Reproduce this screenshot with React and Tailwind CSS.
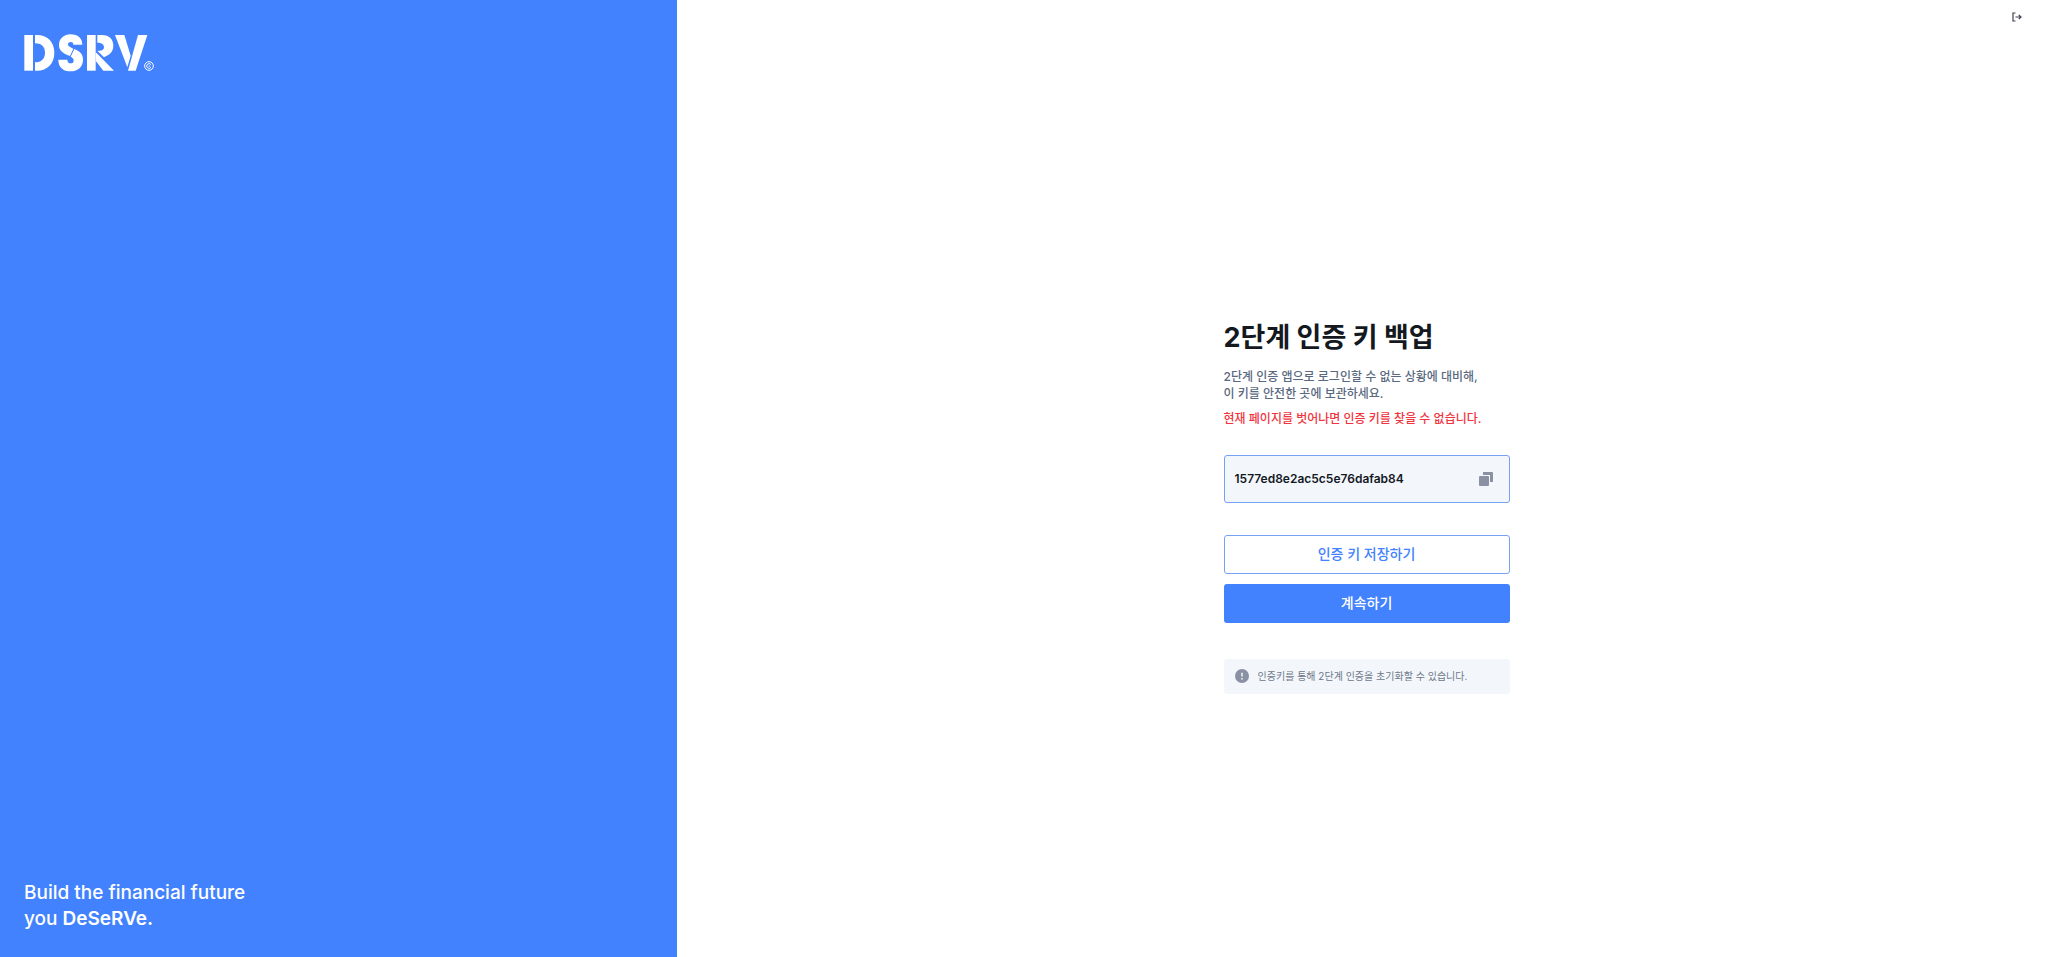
import React, { useState } from 'react';

const AUTH_KEY = '1577ed8e2ac5c5e76dafab84';

const Logo = () => (
  <svg className="w-[131px] h-[38px]" viewBox="42 42 393 114" fill="white" role="img" aria-label="DSRV">
    {/* D */}
    <path d="M43 45H69V152H43z" />
    <path d="M75 45H80C113 45 133 66 133 98S113 152 80 152H75V127C94 127 105 116 105 98S94 70 75 70z" />
    {/* S */}
    <path d="M217 74H190C190 68 187 66 182 66C177 66 174 69 174 73C174 78 177 80 184 83L190 86L180 108C158 100 147 92 147 75C147 56 162 43 182 43C203 43 217 55 217 74z" />
    <path d="M145 119H172C172 126 176 130 182 130C188 130 191 127 191 122C191 116 188 113 182 110L193 87C211 94 219 103 219 119C219 140 204 154 182 154C159 154 145 141 145 119z" />
    {/* R */}
    <path d="M231 45H257V152H231z" />
    <path d="M262 45H276C298 45 310 58 310 77C310 89 305 98 296 104L282 112L262 92C275 94 282 90 282 82C282 73 275 68 262 68z" />
    <path d="M257 96L312 152H280L257 122z" />
    {/* V */}
    <path d="M315 45H343L362 107L352 142z" />
    <path d="M384 45H412L377 152H354z" />
    <g fill="none" stroke="white" strokeWidth="3">
      <circle cx="417" cy="138" r="13" />
      <path d="M423 134A7 7 0 1 0 423 142" />
    </g>
    <circle cx="418" cy="138" r="2" />
  </svg>
);

const App = () => {
  const [copied, setCopied] = useState(false);

  const handleCopy = () => {
    navigator.clipboard?.writeText(AUTH_KEY);
    setCopied(true);
  };

  const handleSave = () => {
    const link = document.createElement('a');
    link.href = URL.createObjectURL(new Blob([AUTH_KEY], { type: 'text/plain' }));
    link.download = 'key.txt';
    link.click();
  };

  return (
    <div className="flex min-h-screen bg-white font-['Inter','Noto_Sans_CJK_KR',sans-serif]">
      <aside className="w-[33.06%] shrink-0 flex flex-col justify-between bg-[#4282ff] px-6 pt-[34px] pb-[25px]">
        <Logo />
        <p className="text-[19px] leading-[26px] font-medium text-white">
          Build the financial future
          <br />
          you <strong className="font-semibold">DeSeRVe.</strong>
        </p>
      </aside>

      <div className="flex-1 flex flex-col">
        <header className="flex justify-end h-8 pt-3 pr-[26px]">
          <button type="button" aria-label="로그아웃" className="w-[10px] h-[10px]">
            <svg viewBox="0 0 10 10" className="w-full h-full" fill="none" stroke="#3d424d" strokeWidth="1.2">
              <path d="M3.5 1H1V9H3.5M3.5 5H9M6.8 2.8L9 5L6.8 7.2" />
            </svg>
          </button>
        </header>

        <main className="flex-1 flex items-center justify-center pl-2 pt-6">
          <div className="w-[286px]">
            <h1 className="text-[27px] leading-9 font-bold text-[#14181f]">2단계 인증 키 백업</h1>
            <p className="mt-3 text-xs leading-[17px] font-medium text-[#5a6980]">
              2단계 인증 앱으로 로그인할 수 없는 상황에 대비해,
              <br />이 키를 안전한 곳에 보관하세요.
            </p>
            <p className="mt-2 text-xs leading-[17px] font-medium text-[#f0353f]">
              현재 페이지를 벗어나면 인증 키를 찾을 수 없습니다.
            </p>

            <div className="mt-7 flex items-center justify-between h-12 pl-[10px] pr-4 rounded-[3px] border border-[#78a1f4] bg-[#f3f7fc]">
              <span className="text-xs font-semibold text-[#14181f]">{AUTH_KEY}</span>
              <button type="button" aria-label={copied ? '복사됨' : '복사'} onClick={handleCopy}>
                <svg viewBox="0 0 14 14" className="w-[14px] h-[14px]" fill="#8a91a2">
                  <rect x="0" y="4" width="10" height="10" rx="1" />
                  <path d="M4 0H13Q14 0 14 1V10H11V3H4z" />
                </svg>
              </button>
            </div>

            <div className="mt-8 flex flex-col gap-[10px]">
              <button
                type="button"
                onClick={handleSave}
                className="h-[39px] rounded-[3px] border border-[#78a1f4] bg-white text-sm font-medium text-[#4282ff]"
              >
                인증 키 저장하기
              </button>
              <button type="button" className="h-[39px] rounded-[3px] bg-[#4282ff] text-sm font-medium text-white">
                계속하기
              </button>
            </div>

            <div className="mt-9 flex items-center gap-[9px] h-[35px] px-[11px] rounded-[3px] bg-[#f3f7fc]">
              <svg viewBox="0 0 14 14" className="w-[14px] h-[14px]">
                <circle cx="7" cy="7" r="7" fill="#8a91a2" />
                <path d="M7 3.8V7.6M7 9V10.4" stroke="#f3f7fc" strokeWidth="1.5" />
              </svg>
              <span className="text-[10px] text-[#6e7788]">인증키를 통해 2단계 인증을 초기화할 수 있습니다.</span>
            </div>
          </div>
        </main>
      </div>
    </div>
  );
};

export default App;
